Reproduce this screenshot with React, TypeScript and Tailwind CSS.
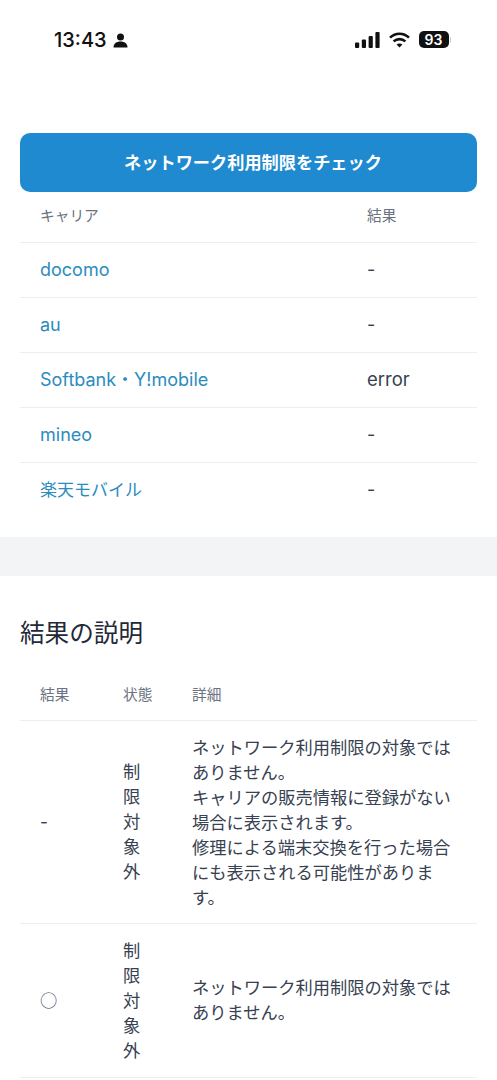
const FONT = "font-['Inter','Noto_Sans_CJK_JP',sans-serif]";

function Person() {
  return (
    <svg width="15" height="15" viewBox="0 0 15 15" fill="#111">
      <circle cx="7.5" cy="4" r="3.5" />
      <path d="M0.5 14.5 C0.5 10.5 3.5 8.5 7.5 8.5 C11.5 8.5 14.5 10.5 14.5 14.5 Z" />
    </svg>
  );
}

function Signal() {
  return (
    <svg width="25" height="16" viewBox="0 0 25 16" fill="#111">
      <rect x="0" y="10.5" width="4.2" height="5.5" rx="1" />
      <rect x="6.8" y="7.5" width="4.2" height="8.5" rx="1" />
      <rect x="13.6" y="4" width="4.2" height="12" rx="1" />
      <rect x="20.4" y="0" width="4.2" height="16" rx="1" />
    </svg>
  );
}

function Wifi() {
  return (
    <svg width="21" height="16" viewBox="0 0 21 16" fill="none" stroke="#111" strokeWidth="2.6">
      <path d="M1 5.6 C6.4 0.4 14.6 0.4 20 5.6" />
      <path d="M4.6 9.4 C8 6.3 13 6.3 16.4 9.4" />
      <path d="M10.5 15.5 L7.6 12.6 C9.3 11.2 11.7 11.2 13.4 12.6 Z" fill="#111" stroke="none" />
    </svg>
  );
}

const carriers = [
  ["docomo", "-", "text-[18px]"],
  ["au", "-", "text-[18px]"],
  ["Softbank・Y!mobile", "error", "text-[18px]"],
  ["mineo", "-", "text-[18px]"],
  ["楽天モバイル", "-", "pt-[2px] text-[17px]"],
];

function Status() {
  return (
    <td className="w-[69px] pl-5 align-middle">
      <div className="w-[17.25px] leading-[25px]">制限対象外</div>
    </td>
  );
}

export default function App() {
  return (
    <div className={`${FONT} h-[1080px] overflow-hidden bg-white text-[17.25px] text-[#374151]`}>
      <header className="flex h-[133px] items-start justify-between pl-[54px] pr-[46px] pt-[28px]">
        <div className="flex items-center gap-[6px]">
          <span className="text-[20px] font-medium leading-[24px] text-[#111]">13:43</span>
          <Person />
        </div>
        <div className="flex items-center gap-[9px] pt-[3px]">
          <Signal />
          <Wifi />
          <div className="flex items-center">
            <span className="flex h-[17px] w-[30px] items-center justify-center rounded-[5px] bg-[#111] text-[14px] font-semibold leading-none text-white">
              93
            </span>
            <span className="ml-[1px] h-[6px] w-[1.5px] rounded-r bg-[#ccc]" />
          </div>
        </div>
      </header>

      <div className="px-5">
        <button className="block h-[59px] w-full rounded-[10px] bg-[#1f8acf] pl-[9px] text-[17.2px] font-semibold text-white">
          ネットワーク利用制限をチェック
        </button>
        <table className="w-full border-collapse">
          <thead>
            <tr className="h-[50px] border-b border-[#eceef1] text-left text-[14.7px] text-[#6b7280]">
              <th className="pb-[1px] pl-5 font-normal">キャリア</th>
              <th className="w-[110px] pb-[1px] pl-0 font-normal">結果</th>
            </tr>
          </thead>
          <tbody>
            {carriers.map(([name, result, size]) => (
              <tr key={name} className="h-[55px] border-b border-[#eceef1] last:border-b-0">
                <td className={`pl-5 text-[#2b8cbe] ${size}`}>{name}</td>
                <td className={result === "error" ? "text-[18.5px]" : "text-[18px]"}>{result}</td>
              </tr>
            ))}
          </tbody>
        </table>
      </div>

      <div className="mt-5 h-[39px] bg-[#f3f4f6]" />

      <section className="px-5">
        <h2 className="pt-[41px] text-[24.6px] font-normal leading-[32px] text-[#1f2937]">結果の説明</h2>
        <table className="mt-[14px] w-full border-collapse">
          <thead>
            <tr className="h-[57px] border-b border-[#eceef1] text-left text-[14.7px] text-[#6b7280]">
              <th className="w-[83px] pl-5 pt-[8px] font-normal">結果</th>
              <th className="w-[69px] pl-5 pt-[8px] font-normal">状態</th>
              <th className="pl-5 pt-[8px] font-normal">詳細</th>
            </tr>
          </thead>
          <tbody>
            <tr className="h-[203px] border-b border-[#eceef1]">
              <td className="pl-5">-</td>
              <Status />
              <td className="pl-5 pr-5 pt-[1px] leading-[25px]">
                ネットワーク利用制限の対象ではありません。
                <br />
                キャリアの販売情報に登録がない場合に表示されます。
                <br />
                修理による端末交換を行った場合にも表示される可能性があります。
              </td>
            </tr>
            <tr className="h-[154px] border-b border-[#eceef1]">
              <td className="pl-5 font-['Noto_Sans_CJK_JP',sans-serif] font-light">○</td>
              <Status />
              <td className="pl-5 pr-5 leading-[25px]">ネットワーク利用制限の対象ではありません。</td>
            </tr>
          </tbody>
        </table>
      </section>
    </div>
  );
}
